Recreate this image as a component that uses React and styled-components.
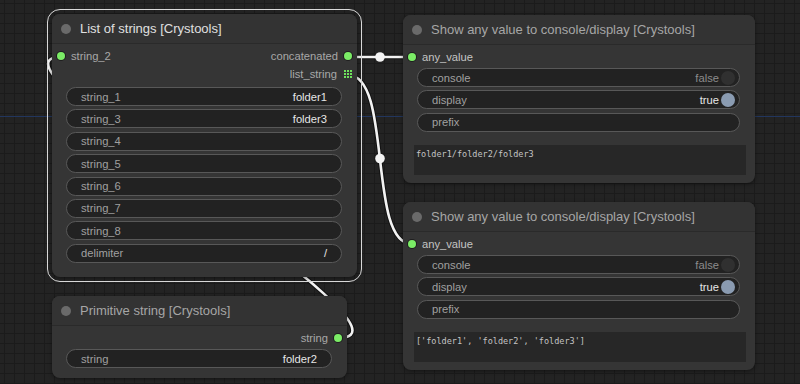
import React from 'react';
import styled, { createGlobalStyle } from 'styled-components';

const GlobalStyle = createGlobalStyle`
  * { box-sizing: border-box; }
  body {
    margin: 0;
    background: #222;
    font-family: "Liberation Sans", Arial, sans-serif;
  }
`;

const listWidgets = [
  ['string_1', 'folder1'],
  ['string_3', 'folder3'],
  ['string_4', ''],
  ['string_5', ''],
  ['string_6', ''],
  ['string_7', ''],
  ['string_8', ''],
  ['delimiter', '/'],
];

function ListIcon() {
  return (
    <IconGrid>
      {Array.from({ length: 9 }).map((_, i) => <span key={i} />)}
    </IconGrid>
  );
}

function ShowAnyNode({ left, top, text }) {
  return (
    <Node $left={left} $top={top} $width={352} $height={168}>
      <TitleBar>
        <TitleDot />
        <TitleText>Show any value to console/display [Crystools]</TitleText>
      </TitleBar>
      <NodeBody>
        <SlotRow>
          <Slot>
            <SlotDot />
            <SlotLabel $bright>any_value</SlotLabel>
          </Slot>
        </SlotRow>
        <WidgetList $top={2}>
          <Widget $toggle>
            <WidgetLabel>console</WidgetLabel>
            <ToggleValue>
              <WidgetValue $dim>false</WidgetValue>
              <Knob />
            </ToggleValue>
          </Widget>
          <Widget $toggle>
            <WidgetLabel>display</WidgetLabel>
            <ToggleValue>
              <WidgetValue>true</WidgetValue>
              <Knob $on />
            </ToggleValue>
          </Widget>
          <Widget>
            <WidgetLabel>prefix</WidgetLabel>
          </Widget>
        </WidgetList>
        <OutputBox>{text}</OutputBox>
      </NodeBody>
    </Node>
  );
}

export default function App() {
  return (
    <>
      <GlobalStyle />
      <Canvas>
        <Links width="800" height="384" viewBox="0 0 800 384">
          <line x1="0" y1="116.5" x2="800" y2="116.5" stroke="#22365e" strokeWidth="1.2" />
          <g fill="none" strokeLinecap="round">
            <path d="M338,338 C440,338 -35,57 61,57" stroke="#111" strokeWidth="4.5" />
            <path d="M338,338 C440,338 -35,57 61,57" stroke="#f2f2f2" strokeWidth="2.6" />
            <path d="M348,57 L412,57" stroke="#111" strokeWidth="4.5" />
            <path d="M348,57 L412,57" stroke="#f2f2f2" strokeWidth="2.6" />
            <path d="M348,75 C393,75 367,244 412,244" stroke="#111" strokeWidth="4.5" />
            <path d="M348,75 C393,75 367,244 412,244" stroke="#f2f2f2" strokeWidth="2.6" />
          </g>
          <circle cx="380" cy="57" r="4.8" fill="#f4f4f4" />
          <circle cx="380" cy="158.5" r="4.8" fill="#f4f4f4" />
        </Links>

        {/* List of strings, selected */}
        <Node $left={52} $top={14} $width={305} $height={263} $selected>
          <TitleBar>
            <TitleDot />
            <TitleText $bright>List of strings [Crystools]</TitleText>
          </TitleBar>
          <NodeBody>
            <SlotRow>
              <Slot>
                <SlotDot />
                <SlotLabel>string_2</SlotLabel>
              </Slot>
              <Slot>
                <SlotLabel>concatenated</SlotLabel>
                <SlotDot />
              </Slot>
            </SlotRow>
            <SlotRow $end>
              <Slot>
                <SlotLabel>list_string</SlotLabel>
                <ListIcon />
              </Slot>
            </SlotRow>
            <WidgetList $top={4}>
              {listWidgets.map(([label, value]) => (
                <Widget key={label}>
                  <WidgetLabel>{label}</WidgetLabel>
                  <WidgetValue>{value}</WidgetValue>
                </Widget>
              ))}
            </WidgetList>
          </NodeBody>
        </Node>

        <Node $left={52} $top={296} $width={295} $height={82}>
          <TitleBar>
            <TitleDot />
            <TitleText>Primitive string [Crystools]</TitleText>
          </TitleBar>
          <NodeBody>
            <SlotRow $end>
              <Slot>
                <SlotLabel>string</SlotLabel>
                <SlotDot />
              </Slot>
            </SlotRow>
            <WidgetList $top={2}>
              <Widget>
                <WidgetLabel>string</WidgetLabel>
                <WidgetValue>folder2</WidgetValue>
              </Widget>
            </WidgetList>
          </NodeBody>
        </Node>

        <ShowAnyNode left={403} top={15} text="folder1/folder2/folder3" />
        <ShowAnyNode left={403} top={202} text="['folder1', 'folder2', 'folder3']" />
      </Canvas>
    </>
  );
}

const Canvas = styled.div`
  position: relative;
  width: 800px;
  height: 384px;
  overflow: hidden;
  background-color: #232323;
  background-image:
    linear-gradient(to right, #1b1b1b 1px, transparent 1px),
    linear-gradient(to bottom, #1b1b1b 1px, transparent 1px);
  background-size: 10px 10px;
  background-position: 4px 3px;
`;

const Links = styled.svg`
  position: absolute;
  left: 0;
  top: 0;
`;

const Node = styled.div`
  position: absolute;
  left: ${(p) => p.$left}px;
  top: ${(p) => p.$top}px;
  width: ${(p) => p.$width}px;
  height: ${(p) => p.$height}px;
  display: flex;
  flex-direction: column;
  background: #353535;
  border-radius: 8px;
  box-shadow: 0 1px 4px rgba(0, 0, 0, 0.45);
  outline: ${(p) => (p.$selected ? '1.6px solid #d8d8d8' : 'none')};
  outline-offset: 4px;
`;

const TitleBar = styled.div`
  display: flex;
  align-items: center;
  gap: 9px;
  height: 30px;
  padding-left: 9px;
  background: #333;
  border-bottom: 1px solid #2a2a2a;
  border-radius: 8px 8px 0 0;
  flex-shrink: 0;
`;

const TitleDot = styled.span`
  width: 10px;
  height: 10px;
  border-radius: 50%;
  background: #6a6a6a;
`;

const TitleText = styled.span`
  font-size: 13px;
  color: ${(p) => (p.$bright ? '#e0e0e0' : '#a6a6a6')};
  white-space: nowrap;
`;

const NodeBody = styled.div`
  display: flex;
  flex-direction: column;
  padding-top: 3px;
`;

const SlotRow = styled.div`
  display: flex;
  align-items: center;
  justify-content: ${(p) => (p.$end ? 'flex-end' : 'space-between')};
  height: 18px;
  padding: 0 5px;
`;

const Slot = styled.div`
  display: flex;
  align-items: center;
  gap: 6px;
`;

const SlotDot = styled.span`
  width: 8px;
  height: 8px;
  border-radius: 50%;
  background: #7bec66;
  box-shadow: 0 0 0 1px #1e1e1e;
`;

const SlotLabel = styled.span`
  font-size: 11.2px;
  color: ${(p) => (p.$bright ? '#c4c4c4' : '#a8a8a8')};
`;

const IconGrid = styled.span`
  display: grid;
  grid-template-columns: repeat(3, 2px);
  grid-auto-rows: 2px;
  gap: 1px;
  padding: 0 0.5px;

  span {
    background: #6fe35c;
  }
`;

const WidgetList = styled.div`
  display: flex;
  flex-direction: column;
  gap: 3.4px;
  margin: ${(p) => p.$top}px 15px 0 14px;
`;

const Widget = styled.div`
  display: flex;
  align-items: center;
  justify-content: space-between;
  height: 19px;
  padding: 0 ${(p) => (p.$toggle ? '4px' : '14px')} 0 14px;
  background: #222;
  border: 1px solid #585858;
  border-radius: 10px;
  font-size: 11.2px;
`;

const WidgetLabel = styled.span`
  color: #a0a0a0;
`;

const WidgetValue = styled.span`
  color: ${(p) => (p.$dim ? '#8c8c8c' : '#e6e6e6')};
`;

const ToggleValue = styled.span`
  display: flex;
  align-items: center;
  gap: 2px;
`;

const Knob = styled.span`
  width: 14px;
  height: 14px;
  border-radius: 50%;
  background: ${(p) => (p.$on ? '#8a9bb1' : '#303030')};
`;

const OutputBox = styled.div`
  height: 30px;
  margin: 13px 9px 0 11px;
  padding: 3px 2px;
  background: #272727;
  color: #c4c4c4;
  font-family: "DejaVu Sans Mono", "Liberation Mono", monospace;
  font-size: 8.5px;
  line-height: 12px;
  white-space: pre;
`;
